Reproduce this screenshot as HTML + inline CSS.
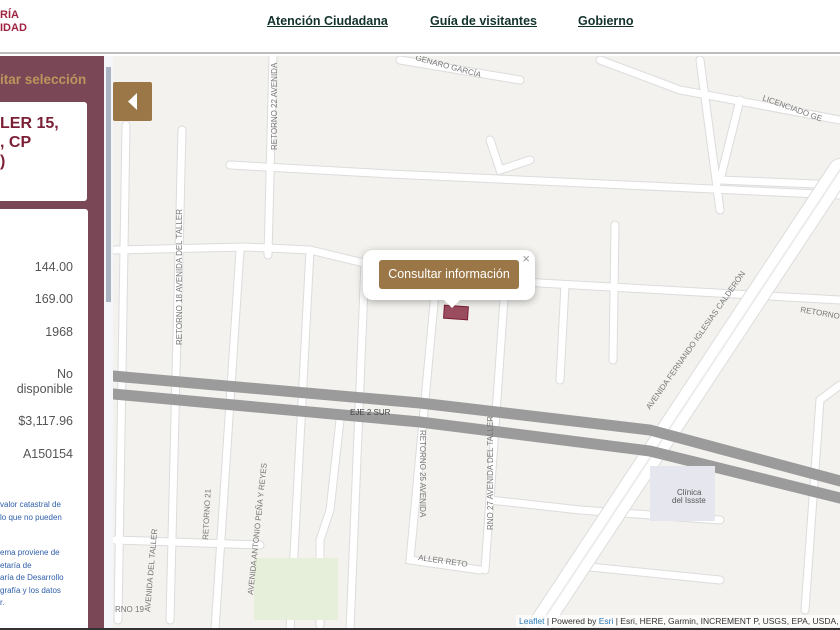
<!DOCTYPE html>
<html><head><meta charset="utf-8"><style>
*{margin:0;padding:0;box-sizing:border-box}
body{width:840px;height:630px;overflow:hidden;font-family:"Liberation Sans",sans-serif;background:#fff;position:relative}
.hdr{position:absolute;left:0;top:0;width:840px;height:54px;background:#fff;border-bottom:2px solid #bdbdbd}
.logo{position:absolute;left:0;top:9px;color:#9f2241;font-weight:bold;font-size:11px;line-height:13px}
.nav a{position:absolute;top:14px;color:#13322b;font-weight:bold;font-size:12.5px;text-decoration:underline}
.side{position:absolute;left:0;top:56px;width:104px;height:574px;background:#7a4757}
.sb{position:absolute;left:104px;top:56px;width:9px;height:574px;background:#f4f6f9}
.sb div{position:absolute;left:2px;top:11px;width:5px;height:235px;background:#a9b3c2}
.title{position:absolute;left:0;top:72px;color:#bc955c;font-weight:bold;font-size:13.5px}
.c1{position:absolute;left:0;top:102px;width:87px;height:99px;background:#fff;border-radius:0 3px 3px 0;color:#7a1f35;font-weight:bold;font-size:16px;line-height:19px;padding:12px 0 0 0}
.c2{position:absolute;left:0;top:209px;width:88px;height:421px;background:#fff;border-radius:0 3px 0 0;font-size:12.5px;color:#555}
.v{position:absolute;right:15px;text-align:right}
.n{position:absolute;left:0;font-size:8px;color:#2f5ea8;line-height:12.5px}
.map{position:absolute;left:113px;top:56px;width:727px;height:574px;background:#f3f2ee;overflow:hidden}
.btn{position:absolute;left:113px;top:82px;width:39px;height:39px;background:#9b7646;border-radius:2px}
.pop{position:absolute;left:363px;top:250px;width:172px;height:50px;background:#fff;border-radius:10px;box-shadow:0 2px 8px rgba(0,0,0,.3)}
.pop b{position:absolute;left:16px;top:10px;width:140px;height:29px;background:#9b7646;color:#fff;font-weight:normal;font-size:12.5px;line-height:29px;text-align:center;border-radius:3px}
.attr{position:absolute;left:516px;top:615px;font-size:8.5px;color:#333;background:rgba(255,255,255,.7);padding:1px 3px;white-space:nowrap}
</style></head><body>
<div class="hdr">
<div class="logo">RÍA<br>IDAD</div>
<div class="nav"><a style="left:267px">Atención Ciudadana</a><a style="left:430px">Guía de visitantes</a><a style="left:578px">Gobierno</a></div>
</div>
<div class="side"></div>
<div class="sb"><div></div></div>
<div class="title">itar selección</div>
<div class="c1">LER 15,<br>, CP<br>)</div>
<div class="c2">
<div class="v" style="top:51px">144.00</div>
<div class="v" style="top:83px">169.00</div>
<div class="v" style="top:116px">1968</div>
<div class="v" style="top:158px;line-height:15px">No<br>disponible</div>
<div class="v" style="top:205px">$3,117.96</div>
<div class="v" style="top:238px">A150154</div>
<div class="n" style="top:290px">valor catastral de<br> lo que no pueden</div>
<div class="n" style="top:338px">ema proviene de<br>etaría de<br>aría de Desarrollo<br>grafía y los datos<br>r.</div>
</div>
<div class="map">
<svg width="727" height="574" viewBox="113 56 727 574" style="position:absolute;left:0;top:0">
<g fill="none" stroke-linecap="round">
<g stroke="#dcdcdc" stroke-width="9">
<path d="M126 125 L118 620"/><path d="M182 130 L170 620"/><path d="M273 56 L268 255"/><path d="M230 165 L390 174 L840 195"/><path d="M115 250 L245 247 L310 250 L360 262 L540 283 L840 300"/>
<path d="M240 250 L215 630"/><path d="M310 250 L290 630"/><path d="M365 262 L350 630"/><path d="M436 282 L410 560 L480 570"/><path d="M505 285 L485 570"/><path d="M565 285 L560 380"/><path d="M615 225 L613 360"/><path d="M115 540 L260 545"/><path d="M490 500 L580 510"/><path d="M580 510 L720 520"/><path d="M570 565 L720 580"/><path d="M840 385 L820 400 L805 610"/><path d="M340 420 L330 510 L320 540 L320 625"/>
<path d="M400 60 L520 80 M600 60 L680 90 L840 120 M700 60 L720 210 M740 100 L720 180 L840 185"/>
<path d="M490 140 L500 170 L530 160"/>
</g>
<g stroke="#fff" stroke-width="7">
<path d="M126 125 L118 620"/><path d="M182 130 L170 620"/><path d="M273 56 L268 255"/><path d="M230 165 L390 174 L840 195"/><path d="M115 250 L245 247 L310 250 L360 262 L540 283 L840 300"/>
<path d="M240 250 L215 630"/><path d="M310 250 L290 630"/><path d="M365 262 L350 630"/><path d="M436 282 L410 560 L480 570"/><path d="M505 285 L485 570"/><path d="M565 285 L560 380"/><path d="M615 225 L613 360"/><path d="M115 540 L260 545"/><path d="M490 500 L580 510"/><path d="M580 510 L720 520"/><path d="M570 565 L720 580"/><path d="M840 385 L820 400 L805 610"/><path d="M340 420 L330 510 L320 540 L320 625"/>
<path d="M400 60 L520 80 M600 60 L680 90 L840 120 M700 60 L720 210 M740 100 L720 180 L840 185"/>
<path d="M490 140 L500 170 L530 160"/>
</g>
<path d="M530 640 L840 170" stroke="#dcdcdc" stroke-width="24"/>
<path d="M530 640 L840 170" stroke="#fff" stroke-width="22"/>
<path d="M530 640 L840 170" stroke="#ececec" stroke-width="2"/>
<path d="M113 376 L420 403 L650 430 L840 481" stroke="#9b9b9b" stroke-width="11"/>
<path d="M113 394 L420 422 L650 451 L840 498" stroke="#9b9b9b" stroke-width="11"/>
</g>
<rect x="650" y="466" width="65" height="55" fill="#e5e6ee"/>
<rect x="254" y="558" width="84" height="62" fill="#e5efd9"/>
<rect x="444" y="306" width="24" height="13" fill="#9a4d5f" stroke="#7a1f35" transform="rotate(4 456 312)"/>
<g font-size="8" fill="#777" font-family="Liberation Sans">
<text x="415" y="60" transform="rotate(15 415 60)">GENARO GARCÍA</text>
<text x="277" y="150" transform="rotate(-90 277 150)">RETORNO 22 AVENIDA</text>
<text x="182" y="345" transform="rotate(-90 182 345)">RETORNO 18 AVENIDA DEL TALLER</text>
<text x="350" y="415" fill="#444">EJE 2 SUR</text>
<text x="420" y="430" transform="rotate(90 420 430)">RETORNO 25 AVENIDA</text>
<text x="493" y="530" transform="rotate(-90 493 530)">RNO 27 AVENIDA DEL TALLER</text>
<text x="650" y="410" transform="rotate(-55 650 410)">AVENIDA FERNANDO IGLESIAS CALDERÓN</text>
<text x="800" y="312" transform="rotate(10 800 312)">RETORNO</text>
<text x="762" y="100" transform="rotate(20 762 100)">LICENCIADO GE</text>
<text x="253" y="595" transform="rotate(-84 253 595)">AVENIDA ANTONIO PEÑA Y REYES</text>
<text x="208" y="540" transform="rotate(-87 208 540)">RETORNO 21</text>
<text x="150" y="612" transform="rotate(-85 150 612)">AVENIDA DEL TALLER</text>
<text x="115" y="612">RNO 19</text>
<text x="418" y="560" transform="rotate(8 418 560)">ALLER RETO</text>
<text x="677" y="495" fill="#555">Clínica</text><text x="672" y="503" fill="#555">del Issste</text>
</g>
</svg>
</div>
<div class="btn"><svg width="39" height="39"><path d="M24 11 L15 19.5 L24 28 Z" fill="#fff"/></svg></div>
<div class="pop"><b>Consultar información</b><span style="position:absolute;right:5px;top:1px;color:#999;font-size:13px">×</span><div style="position:absolute;left:80px;bottom:-8px;width:0;height:0;border-left:9px solid transparent;border-right:9px solid transparent;border-top:9px solid #fff"></div></div>
<div class="attr"><span style="color:#2b7bb9">Leaflet</span> | Powered by <span style="color:#2b7bb9">Esri</span> | Esri, HERE, Garmin, INCREMENT P, USGS, EPA, USDA,</div>
<div style="position:absolute;left:0;top:628px;width:840px;height:2px;background:#333"></div>
</body></html>
